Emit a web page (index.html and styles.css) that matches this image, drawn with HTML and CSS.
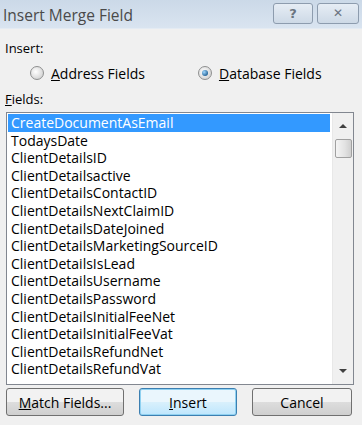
FILE: index.html
```html
<!DOCTYPE html>
<html lang="en">
<head>
    <meta charset="UTF-8">
    <title>Insert Merge Field</title>
    <link rel="stylesheet" href="styles.css">
</head>
<body>
    <div class="window">
        <div class="titlebar">
            <span class="title">Insert Merge Field</span>
            <div class="caption-buttons">
                <button class="cap">?</button>
                <button class="cap close">&#x2715;</button>
            </div>
        </div>
        <div class="content">
            <div class="label insert-label">Insert:</div>
            <div class="radios">
                <label class="radio"><span class="dot"></span><span><u>A</u>ddress Fields</span></label>
                <label class="radio checked"><span class="dot"></span><span><u>D</u>atabase Fields</span></label>
            </div>
            <div class="label fields-label"><u>F</u>ields:</div>
            <div class="listbox">
                <ul class="items">
                    <li class="selected">CreateDocumentAsEmail</li>
                    <li>TodaysDate</li>
                    <li>ClientDetailsID</li>
                    <li>ClientDetailsactive</li>
                    <li>ClientDetailsContactID</li>
                    <li>ClientDetailsNextClaimID</li>
                    <li>ClientDetailsDateJoined</li>
                    <li>ClientDetailsMarketingSourceID</li>
                    <li>ClientDetailsIsLead</li>
                    <li>ClientDetailsUsername</li>
                    <li>ClientDetailsPassword</li>
                    <li>ClientDetailsInitialFeeNet</li>
                    <li>ClientDetailsInitialFeeVat</li>
                    <li>ClientDetailsRefundNet</li>
                    <li>ClientDetailsRefundVat</li>
                </ul>
                <div class="scrollbar">
                    <div class="arrow up"></div>
                    <div class="thumb"></div>
                    <div class="track"></div>
                    <div class="arrow down"></div>
                </div>
            </div>
            <div class="actions">
                <button class="btn match"><u>M</u>atch Fields...</button>
                <button class="btn default"><u>I</u>nsert</button>
                <button class="btn">Cancel</button>
            </div>
        </div>
    </div>
</body>
</html>
```

FILE: styles.css
```css
body {
    margin: 0;
    background: #f0f0f0;
    font-family: "Open Sans", "Noto Sans", sans-serif;
    color: #000;
}
.window {
    width: 362px;
    height: 425px;
    background: #f0f0f0;
    overflow: hidden;
}
.titlebar {
    height: 29px;
    display: flex;
    align-items: center;
    justify-content: space-between;
    padding-left: 3px;
    padding-right: 3px;
    background: linear-gradient(#cbd9e8, #d9e4f0);
    border-bottom: 1px solid #e4ebf3;
    box-sizing: border-box;
}
.title {
    font-size: 15.5px;
    color: #4a4a4a;
    margin-top: 1px;
}
.caption-buttons {
    display: flex;
    gap: 4px;
    align-self: flex-start;
    margin-top: 3px;
}
.cap {
    width: 40px;
    height: 21px;
    border: 1px solid #8d9cae;
    border-radius: 3px;
    background: linear-gradient(#e6edf5, #cdd9e6);
    color: #6a7480;
    font-family: "DejaVu Sans", sans-serif;
    font-weight: bold;
    font-size: 13px;
    line-height: 17px;
    padding: 0;
}
.cap.close {
    width: 42px;
    font-size: 12px;
}
.content {
    padding: 0 8px 0 6px;
}
.label {
    font-size: 13px;
    line-height: 16px;
}
.insert-label {
    margin-top: 11px;
    margin-left: -1px;
}
.radios {
    display: flex;
    margin-top: 8px;
    padding-left: 24px;
    font-size: 14px;
    height: 18px;
    align-items: center;
}
.radio {
    display: flex;
    align-items: center;
    gap: 7px;
}
.radio + .radio {
    margin-left: 53px;
}
.dot {
    width: 12px;
    height: 12px;
    border-radius: 50%;
    border: 1px solid #8e8f8f;
    background: radial-gradient(circle at 40% 40%, #ffffff, #d2d2d2 80%);
    position: relative;
}
.checked .dot::after {
    content: "";
    position: absolute;
    left: 3px;
    top: 3px;
    width: 6px;
    height: 6px;
    border-radius: 50%;
    background: radial-gradient(circle at 35% 35%, #9fd7ff, #1b5b8f 80%);
}
.fields-label {
    margin-top: 9px;
    margin-left: -1px;
}
.listbox {
    margin-top: 5px;
    height: 273px;
    border: 1px solid #828790;
    background: #fff;
    display: flex;
    box-sizing: border-box;
    width: 348px;
}
.items {
    list-style: none;
    margin: 0;
    padding: 1px 0 0 1px;
    flex: 1;
    font-size: 14px;
}
.items li {
    height: 17.6px;
    line-height: 17.6px;
    padding-left: 3px;
    white-space: nowrap;
}
.items li.selected {
    background: #3399ff;
    color: #fff;
}
.scrollbar {
    width: 20px;
    margin-left: 2px;
    background: #f0f0f0;
    border-left: 1px solid #e8e8e8;
    display: flex;
    flex-direction: column;
    align-items: center;
}
.arrow {
    height: 26px;
    width: 100%;
    position: relative;
}
.arrow::after {
    content: "";
    position: absolute;
    left: 6px;
    border-left: 4px solid transparent;
    border-right: 4px solid transparent;
}
.arrow.up::after {
    top: 11px;
    border-bottom: 4px solid #404040;
}
.arrow.down::after {
    top: 11px;
    border-top: 4px solid #404040;
}
.thumb {
    width: 17px;
    height: 19px;
    border: 1px solid #a0a0a0;
    border-radius: 2px;
    box-sizing: border-box;
    background: linear-gradient(90deg, #f4f4f4, #e2e2e2 60%, #cfcfcf);
}
.track {
    flex: 1;
}
.actions {
    display: flex;
    margin-top: 3px;
    gap: 15px;
}
.btn {
    height: 28px;
    font-family: inherit;
    font-size: 14px;
    border: 1px solid #707070;
    border-radius: 3px;
    background: linear-gradient(#f2f2f2 50%, #dddddd 50%, #cfcfcf);
    color: #000;
    padding: 0;
}
.btn.match {
    width: 118px;
}
.btn.default {
    width: 98px;
    border-color: #3c7fb1;
    box-shadow: inset 0 0 0 1px #8fd1f1;
    background: linear-gradient(#eaf6fd 50%, #d9f0fc 50%, #bee6fd);
}
.btn:last-child {
    width: 100px;
}
```
